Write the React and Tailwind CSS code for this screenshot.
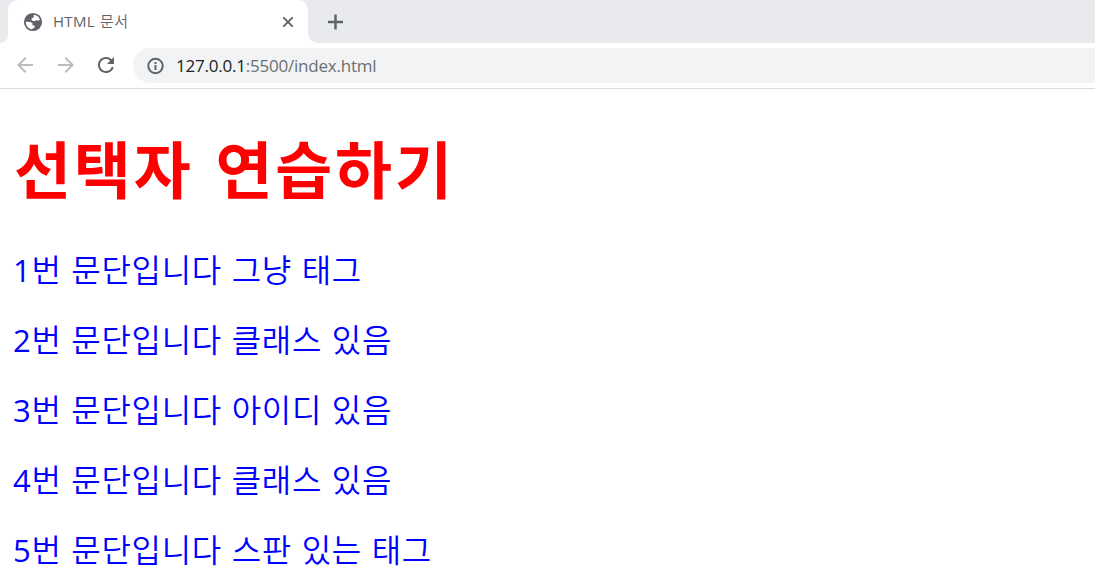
import { MdArrowBack, MdArrowForward, MdRefresh } from "react-icons/md"

const paragraphs = [
  { number: 1, text: "번 문단입니다 그냥 태그" },
  { number: 2, text: "번 문단입니다 클래스 있음" },
  { number: 3, text: "번 문단입니다 아이디 있음" },
  { number: 4, text: "번 문단입니다 클래스 있음" },
  { number: 5, text: "번 문단입니다 스판 있는 태그" },
]

function GlobeIcon() {
  return (
    <svg className="size-[22px] shrink-0" viewBox="0 0 22 22">
      <circle cx="11" cy="11" r="9.1" fill="currentColor" />
      <path
        fill="#fff"
        d="M11.8 3.8C14.5 4 16.9 5.6 17.9 8.4L16.6 9.8L14.3 9.2L12.5 10.3L9.9 9.6L9.3 7.7L11.5 6.6Z"
      />
      <path
        fill="#fff"
        d="M3.8 10.7L8.7 11L10.6 12.6L10.4 14.3L12.8 14.7L12.5 16.5L10 18.2C6.3 17.8 3.7 14.6 3.8 10.7Z"
      />
    </svg>
  )
}

function CloseIcon() {
  return (
    <svg className="size-4" viewBox="0 0 16 16" fill="none" stroke="currentColor" strokeWidth="1.9">
      <path d="M3.3 3.3l9.4 9.4M12.7 3.3l-9.4 9.4" />
    </svg>
  )
}

function PlusIcon() {
  return (
    <svg className="size-6" viewBox="0 0 24 24" fill="none" stroke="currentColor" strokeWidth="2.5">
      <path d="M12.5 4.5v15M5 12h15" />
    </svg>
  )
}

function InfoIcon() {
  return (
    <svg className="size-5" viewBox="0 0 20 20" fill="none" stroke="currentColor" strokeWidth="2">
      <circle cx="10.5" cy="10" r="7.2" />
      <path d="M10.5 9v5M10.5 6v2" />
    </svg>
  )
}

function TabBar() {
  return (
    <div className="flex h-[43px] bg-white">
      <div className="w-2 rounded-br-lg bg-[#e8eaed]" />
      <div className="flex w-[300px] bg-[#e8eaed]">
        <div className="flex h-full w-full items-center rounded-t-[10px] bg-white pr-3 pl-[14px] text-[#5f6368]">
          <GlobeIcon />
          <span className="ml-[9px] flex-1 text-[15px] tracking-[0.3px] [word-spacing:1px]">
            <span className="font-normal">HTML</span> 문서
          </span>
          <CloseIcon />
        </div>
      </div>
      <div className="flex flex-1 items-center rounded-bl-[10px] bg-[#e8eaed] pl-[15px] text-[#5f6368]">
        <PlusIcon />
      </div>
    </div>
  )
}

function Toolbar() {
  return (
    <div className="flex h-[46px] items-center border-b border-[#dadce0] bg-white pb-px pl-[13px]">
      <MdArrowBack className="size-6 text-[#babcbe]" />
      <MdArrowForward className="ml-[17px] size-6 text-[#babcbe]" />
      <MdRefresh className="ml-4 size-6 text-[#5f6368]" />
      <div className="mt-px ml-[15px] flex h-[35px] flex-1 items-center rounded-l-full bg-[#f1f3f4] pl-3 text-[#5f6368]">
        <InfoIcon />
        <span className="ml-[11px] text-[17px] font-normal tracking-[-0.22px] text-[#6b6f73]">
          <span className="text-[#202124]">127.0.0.1</span>:5500/index.html
        </span>
      </div>
    </div>
  )
}

export default function App() {
  return (
    <div className="h-[585px] overflow-hidden bg-white font-['Open_Sans','Noto_Sans_CJK_KR',sans-serif] font-[350]">
      <TabBar />
      <Toolbar />
      <main className="px-[13px]">
        <h1 className="mt-[33px] ml-px font-['Noto_Sans_CJK_KR',sans-serif] text-[62px] leading-[90px] font-bold tracking-[2.8px] whitespace-nowrap text-[#ff0000] [word-spacing:5px]">
          선택자 연습하기
        </h1>
        <div className="mt-[35px] flex flex-col gap-6">
          {paragraphs.map(({ number, text }) => (
            <p
              key={number}
              className="text-[32px] leading-[46px] tracking-[0.7px] whitespace-nowrap text-[#0000ff] [word-spacing:0.7px]"
            >
              <span className="text-[31px] font-normal">{number}</span>
              {text}
            </p>
          ))}
        </div>
      </main>
    </div>
  )
}
